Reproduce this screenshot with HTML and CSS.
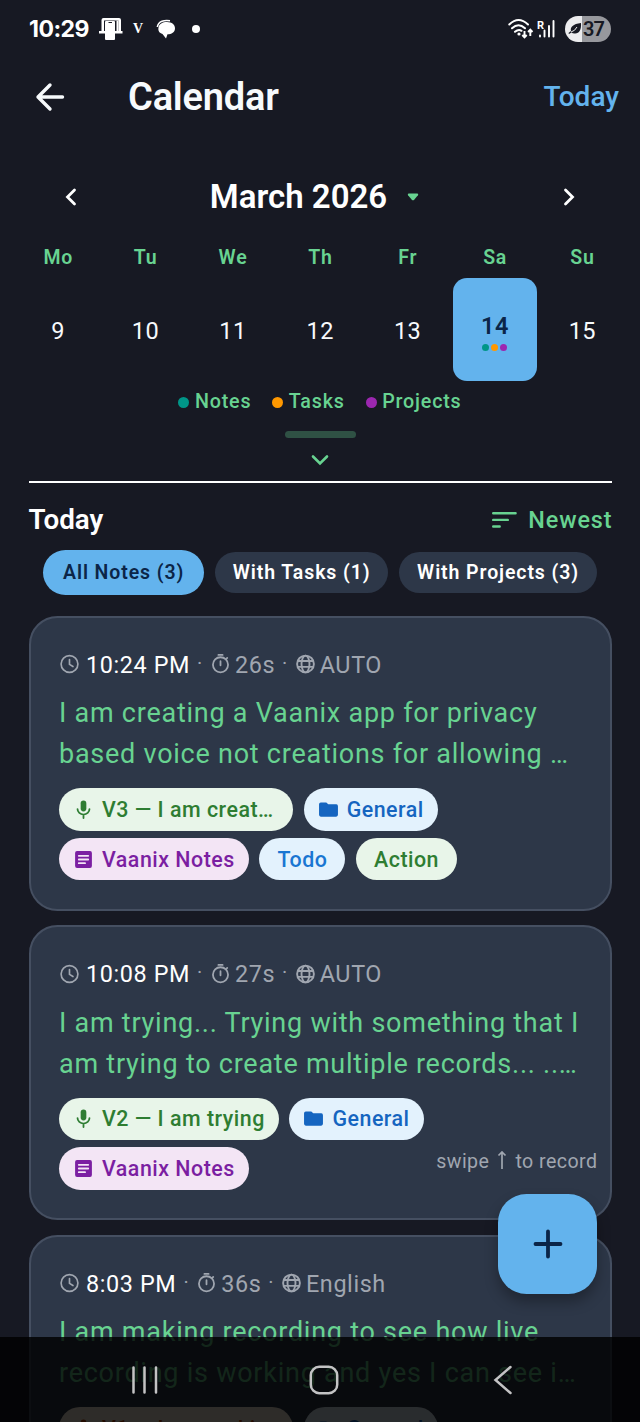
FILE: index.html
```html
<!DOCTYPE html>
<html lang="en">
<head>
<meta charset="utf-8">
<title>Calendar</title>
<link rel="stylesheet" href="styles.css">
</head>
<body>
<svg class="defs" width="0" height="0">
  <symbol id="clock" viewBox="0 0 20 20"><g fill="none" stroke="currentColor" stroke-width="1.6" stroke-linecap="round"><circle cx="10" cy="9.500" r="8"/><path d="M10 5.300V9.900L13.300 11.900"/></g></symbol>
  <symbol id="timer" viewBox="0 0 20 20"><g fill="none" stroke="currentColor" stroke-width="1.7" stroke-linecap="round"><circle cx="10" cy="10.300" r="7.200"/><path d="M8 .900h4M10 6.800v4M15.400 4.800l1-1"/></g></symbol>
  <symbol id="globe" viewBox="0 0 20 20"><g fill="none" stroke="currentColor" stroke-width="1.8"><circle cx="10" cy="9.500" r="8"/><ellipse cx="10" cy="9.500" rx="3.800" ry="8"/><path d="M2.600 6.700h14.800M2.600 12.300h14.800"/></g></symbol>
  <symbol id="mic" viewBox="0 0 20 20"><rect x="7.300" y="1.500" width="5.400" height="10.300" rx="2.700" fill="currentColor"/><path d="M4.300 9.600a5.700 5.200 0 0 0 11.400 0M10 15v3.200" fill="none" stroke="currentColor" stroke-width="1.700" stroke-linecap="round"/></symbol>
  <symbol id="folder" viewBox="0 0 20 20"><path fill="currentColor" d="M2.700 3.300h5.200l1.900 1.800h7.700q1.500 0 1.500 1.700v8.300q0 1.700-1.700 1.700H2.700Q1 16.800 1 15.100V5Q1 3.300 2.700 3.300z"/></symbol>
  <symbol id="article" viewBox="0 0 20 20"><rect x="2" y="2" width="16" height="16" rx="1.800" fill="currentColor"/><path d="M5.500 6.500h9M5.500 10h9M5.500 13.500h6" stroke="#f3e5f5" stroke-width="1.700" stroke-linecap="round"/></symbol>
</svg>
<div class="screen">
  <header class="status">
    <span class="time">10:29</span>
    <svg class="st-device" width="24" height="24" viewBox="0 0 24 24"><path d="M2.500 14V3Q2.500 1 4.500 1H20Q22 1 22 3V14H23.500V16.500H0V14H2.500z" fill="#fff"/><path d="M5 3.500h14.500V14H5z" fill="#171923"/><path d="M17.500 3.500h2V14h-2z" fill="#fff"/><rect x="6" y="4" width="10" height="19" rx="1" fill="#fff"/><path d="M9.500 5.500h3.500" stroke="#171923"/></svg>
    <span class="st-v">V</span>
    <svg class="st-chat" width="20" height="20" viewBox="0 0 20 20"><path d="M1.300 8A7.500 7.500 0 0 1 6 2.200Q9 1.300 14 1.800" fill="none" stroke="#fff" stroke-width="1.500"/><path d="M11 3C16 3 19 5.800 19 9.300C19 13.300 15.500 15.300 11.500 15.300L10 19.500L6.500 15C3.500 14 1.800 12 2.500 8.500C3 5 6.500 3 11 3z" fill="#fff"/></svg>
    <i class="st-dot"></i>
    <span class="spacer"></span>
    <svg class="st-wifi" width="27" height="22" viewBox="0 0 27 22"><g fill="none" stroke="#fff" stroke-width="2" stroke-linecap="round"><path d="M2.300 6.500Q11.500 -2.500 21 6.500M5 10.300Q11.500 4.300 18 10.300M8 13.800Q11.500 10.800 14.500 12.800"/></g><circle cx="12" cy="16" r="1.600" fill="#fff"/><path d="M17.500 13v6M15.300 17l2.200 2.400 2.200-2.400M23.300 18v-6M21.100 14l2.200-2.400 2.200 2.400" fill="none" stroke="#fff" stroke-width="1.900"/></svg>
    <svg class="st-signal" width="20" height="22" viewBox="0 0 20 22"><path d="M4 17.500v1M8.500 12.500v6M13 8v10.500M17.500 3v15.500" stroke="#fff" stroke-width="1.900" stroke-linecap="round"/><text x="1" y="11" class="roam">R</text></svg>
    <span class="battery"><svg width="14" height="14" viewBox="0 0 14 14"><path d="M13 1C13.500 8 11 12 6.500 11.500Q4.500 11.500 3.500 10.500L1 12L.5 11L3 9C2 5 5 2 13 1z" fill="#171923"/><path d="M3 10Q7 9 9 5" stroke="#eee" fill="none"/></svg>37</span>
  </header>

  <div class="appbar">
    <svg class="back" width="30" height="30" viewBox="0 0 30 30"><path d="M27.500 15H3M15 3L3 15L15 27" fill="none" stroke="#f7fafc" stroke-width="3.400" stroke-linecap="round" stroke-linejoin="round"/></svg>
    <h1>Calendar</h1>
    <span class="goto">Today</span>
  </div>

  <section class="calendar">
    <div class="month">
      <svg width="12" height="18" viewBox="0 0 12 18"><path d="M9.500 2L2.500 9l7 7" fill="none" stroke="#fff" stroke-width="2.800" stroke-linecap="round" stroke-linejoin="miter"/></svg>
      <div class="month-name"><span>March 2026</span><svg width="12" height="8" viewBox="0 0 12 8"><path d="M1.500 .5h9q1.300.4.400 1.800L7 6.900q-1 .9-2 0L1.100 2.300Q.2.900 1.500.5z" fill="#68d391"/></svg></div>
      <svg width="12" height="18" viewBox="0 0 12 18"><path d="M2.500 2l7 7l-7 7" fill="none" stroke="#fff" stroke-width="2.800" stroke-linecap="round"/></svg>
    </div>
    <div class="week names"><span>Mo</span><span>Tu</span><span>We</span><span>Th</span><span>Fr</span><span>Sa</span><span>Su</span></div>
    <div class="week days"><span>9</span><span>10</span><span>11</span><span>12</span><span>13</span><div class="selected"><b>14</b><div class="marks"><i class="teal"></i><i class="orange"></i><i class="purple"></i></div></div><span>15</span></div>
    <div class="legend"><span><i class="teal"></i>Notes</span><span><i class="orange"></i>Tasks</span><span><i class="purple"></i>Projects</span></div>
    <div class="handle"></div>
    <svg class="expand" width="18" height="12" viewBox="0 0 18 12"><path d="M2 2.500l7 7l7-7" fill="none" stroke="#68d391" stroke-width="2.600" stroke-linecap="round"/></svg>
  </section>

  <main>
    <div class="list-head"><h2>Today</h2><div class="sort"><svg width="25" height="18" viewBox="0 0 25 18"><path d="M1.200 2.200h22.400M1.200 8.900h14.600M1.200 15.500h6.500" stroke="#68d391" stroke-width="2.400" stroke-linecap="round"/></svg><span>Newest</span></div></div>
    <div class="filters"><span class="filter on">All Notes (3)</span><span class="filter">With Tasks (1)</span><span class="filter">With Projects (3)</span></div>

    <article class="card">
      <div class="meta"><svg><use href="#clock"/></svg><b>10:24 PM</b><em>·</em><svg><use href="#timer"/></svg><span>26s</span><em>·</em><svg><use href="#globe"/></svg><span>AUTO</span></div>
      <p>I am creating a Vaanix app for privacy<br>based voice not creations for allowing …</p>
      <div class="tags"><span class="tag voice long"><svg><use href="#mic"/></svg>V3 — I am creat…</span><span class="tag folder"><svg><use href="#folder"/></svg>General</span><span class="tag project"><svg><use href="#article"/></svg>Vaanix Notes</span><span class="tag todo">Todo</span><span class="tag action">Action</span></div>
    </article>

    <article class="card">
      <div class="meta"><svg><use href="#clock"/></svg><b>10:08 PM</b><em>·</em><svg><use href="#timer"/></svg><span>27s</span><em>·</em><svg><use href="#globe"/></svg><span>AUTO</span></div>
      <p>I am trying... Trying with something that I<br>am trying to create multiple records... ..…</p>
      <div class="tags"><span class="tag voice"><svg><use href="#mic"/></svg>V2 — I am trying</span><span class="tag folder"><svg><use href="#folder"/></svg>General</span><span class="tag project"><svg><use href="#article"/></svg>Vaanix Notes</span></div>
    </article>

    <article class="card">
      <div class="meta"><svg><use href="#clock"/></svg><b>8:03 PM</b><em>·</em><svg><use href="#timer"/></svg><span>36s</span><em>·</em><svg><use href="#globe"/></svg><span>English</span></div>
      <p>I am making recording to see how live<br>recording is working and yes I can see i…</p>
      <div class="tags"><span class="tag warm long"><svg><use href="#mic"/></svg>V1 — I am maki…</span><span class="tag folder"><svg><use href="#folder"/></svg>General</span></div>
    </article>
  </main>

  <div class="hint">swipe <svg width="12" height="20" viewBox="0 0 12 20"><path d="M6 18V1M2.500 4.500L6 1l3.500 3.500" fill="none" stroke="#a0a6b0" stroke-width="1.700"/></svg> to record</div>
  <button class="fab" aria-label="Add"><svg width="30" height="30" viewBox="0 0 30 30"><path d="M15 2.500v25M2.500 15h25" stroke="#0b2548" stroke-width="3.800" stroke-linecap="round"/></svg></button>
  <nav class="navbar">
    <svg width="28" height="30" viewBox="0 0 28 30"><path d="M2.500 2.500v25M13.500 2.500v25M25 2.500v25" stroke="#c3c3c4" stroke-width="2.500" stroke-linecap="round"/></svg>
    <svg class="home" width="30" height="30" viewBox="0 0 30 30"><rect x="1.800" y="1.800" width="26.400" height="26.400" rx="8.500" fill="none" stroke="#c3c3c4" stroke-width="2.500"/></svg>
    <svg width="20" height="30" viewBox="0 0 20 30"><path d="M17.500 2L2.500 15l15 13" fill="none" stroke="#c3c3c4" stroke-width="2.500" stroke-linecap="round"/></svg>
  </nav>
</div>
</body>
</html>
```
FILE: styles.css
```css
* { box-sizing: border-box; }
body { margin: 0; background: #171923; font-family: Roboto, "Liberation Sans", sans-serif; color: #fff; }
h1, h2, p { margin: 0; }
i { display: block; border-radius: 50%; }
.defs { position: absolute; }
.screen { position: relative; width: 640px; height: 1422px; overflow: hidden; background: #171923; }
.spacer { flex: 1; }
.teal { background: #009688; }
.orange { background: #ff9800; }
.purple { background: #9c27b0; }

.status { display: flex; align-items: center; height: 58px; padding: 0 29px; }
.time { width: 60px; margin-top: -1px; font: 700 23px Inter, sans-serif; letter-spacing: -0.500px; white-space: nowrap; }
.st-device { margin-left: 10px; }
.st-v { width: 12px; margin-left: 10px; font: 700 14px "Liberation Serif", serif; }
.st-chat { margin-left: 11px; }
.st-dot { width: 8px; height: 8px; margin-left: 16px; background: #fff; }
.st-signal { margin-left: 2px; }
.roam { font: 700 11px Roboto, sans-serif; fill: #fff; }
.battery { display: flex; align-items: center; gap: 1px; width: 46px; height: 26px; margin-left: 9px; padding-left: 3px; border-radius: 13px; background: linear-gradient(90deg, #ececee 17px, #97989d 17px); color: #171923; font: 600 20px Roboto, sans-serif; letter-spacing: -1px; }

.appbar { display: flex; align-items: center; height: 78px; padding: 0 21px 0 35px; }
.appbar h1 { flex: 1; margin-left: 63px; font-size: 38px; font-weight: 600; letter-spacing: -0.200px; color: #f7fafc; }
.goto { padding-bottom: 2px; font-size: 28px; font-weight: 500; color: #63b3ed; }

.calendar { display: flex; flex-direction: column; align-items: center; height: 347px; margin: 0 28.500px; border-bottom: 2px solid #fff; }
.month { display: flex; align-items: center; justify-content: space-between; width: 100%; height: 120px; padding: 1px 36px 0; }
.month-name { display: flex; align-items: center; gap: 20px; margin-left: -11px; font-size: 33px; font-weight: 600; }
.month-name span { padding-bottom: 1px; }
.week { display: grid; grid-template-columns: repeat(7, 87.370px); text-align: center; }
.names { height: 22px; font-size: 19.500px; line-height: 4px; font-weight: 600; letter-spacing: 0.800px; text-indent: 0.800px; color: #68d391; }
.days { height: 103px; align-items: center; font-size: 23.500px; letter-spacing: 0.500px; text-indent: 0.500px; color: #f7fafc; }
.days > span { padding-top: 2px; }
.selected { display: flex; flex-direction: column; align-items: center; justify-content: center; height: 103px; margin: 0 1.800px; padding-top: 4px; border-radius: 14px; background: #63b3ed; color: #0b2548; }
.selected b { font-weight: 600; line-height: 28px; }
.marks { display: flex; gap: 1.800px; margin-top: 4px; }
.marks i { width: 7.100px; height: 7.100px; }
.legend { display: flex; gap: 21px; margin-top: 9px; font-size: 19.700px; line-height: 24px; font-weight: 500; letter-spacing: 0.800px; color: #68d391; }
.legend span { display: flex; align-items: center; gap: 5.500px; }
.legend i { width: 11px; height: 11px; }
.handle { width: 71px; height: 7px; margin-top: 17px; border-radius: 4px; background: #2f5144; }
.expand { margin-top: 16px; }

main { padding: 0 28.500px; }
.list-head { display: flex; align-items: center; justify-content: space-between; height: 67px; padding-top: 8px; }
.list-head h2 { padding-bottom: 2px; font-size: 27.800px; font-weight: 600; }
.sort { display: flex; align-items: center; gap: 11px; margin-right: -1px; padding-bottom: 1px; font-size: 23.400px; font-weight: 500; letter-spacing: 0.900px; color: #68d391; }
.filters { display: flex; align-items: center; justify-content: space-between; height: 45px; padding: 0 14.500px; }
.filter { height: 41px; padding: 0 18px; border-radius: 21px; background: #2d3748; font-size: 19.500px; line-height: 41px; font-weight: 600; letter-spacing: 0.900px; white-space: nowrap; }
.filter.on { height: 45px; padding: 0 20px; border-radius: 23px; line-height: 45px; background: #63b3ed; color: #0b2548; }

.card { height: 295px; margin-top: 14.400px; padding: 28px 28.500px; border: 2px solid #454f61; border-radius: 28.500px; background: #2d3748; }
.filters + .card { margin-top: 20.800px; }
.meta { display: flex; align-items: center; height: 38px; font-size: 23.400px; letter-spacing: 0.600px; color: #a0a6b0; white-space: nowrap; }
.meta svg { width: 21px; height: 21px; margin-right: 6px; }
.meta svg ~ svg { margin-right: 4px; }
.meta b { font-weight: 400; color: #fff; }
.meta em { width: 20px; padding-bottom: 4px; text-align: center; font-style: normal; font-size: 20px; }
.meta span + em { width: 19.500px; }
.card p { height: 82px; margin-top: 9.500px; font-size: 27px; line-height: 41px; letter-spacing: 0.750px; color: #68d391; white-space: nowrap; }
.tags { display: flex; flex-wrap: wrap; gap: 7.500px 10.700px; margin-top: 13px; }
.tag { display: flex; align-items: center; height: 42.300px; padding: 0 14px; border-radius: 22px; font-size: 21.400px; font-weight: 500; letter-spacing: 0.500px; white-space: nowrap; }
.tag svg { width: 21px; height: 21px; margin-right: 8px; }
.tag.long { width: 234px; }
.voice { background: #e8f5e9; color: #2e7d32; }
.folder { background: #e3f2fd; color: #1565c0; }
.project { background: #f3e5f5; color: #7b1fa2; }
.todo { padding: 0 18px; background: #e3f2fd; color: #1976d2; }
.action { padding: 0 18px; background: #e8f5e9; color: #2e7d32; }
.warm { background: #fff3e0; color: #bf4300; }

.hint { position: absolute; top: 1149px; right: 42.500px; display: flex; align-items: center; gap: 7px; height: 24px; font-size: 19.600px; letter-spacing: 0.450px; color: #a0a6b0; }
.fab { position: absolute; top: 1194px; left: 498px; display: grid; place-items: center; width: 99px; height: 100px; padding: 0; border: 0; border-radius: 28.500px; background: #63b3ed; box-shadow: 0 8px 14px rgba(0, 0, 0, .3); }
.navbar { position: absolute; left: 0; right: 0; bottom: 0; display: flex; align-items: center; justify-content: space-between; height: 85px; padding: 0 127px 0 131px; background: rgba(0, 0, 0, .82); }
.home { margin-left: -5px; }
```
